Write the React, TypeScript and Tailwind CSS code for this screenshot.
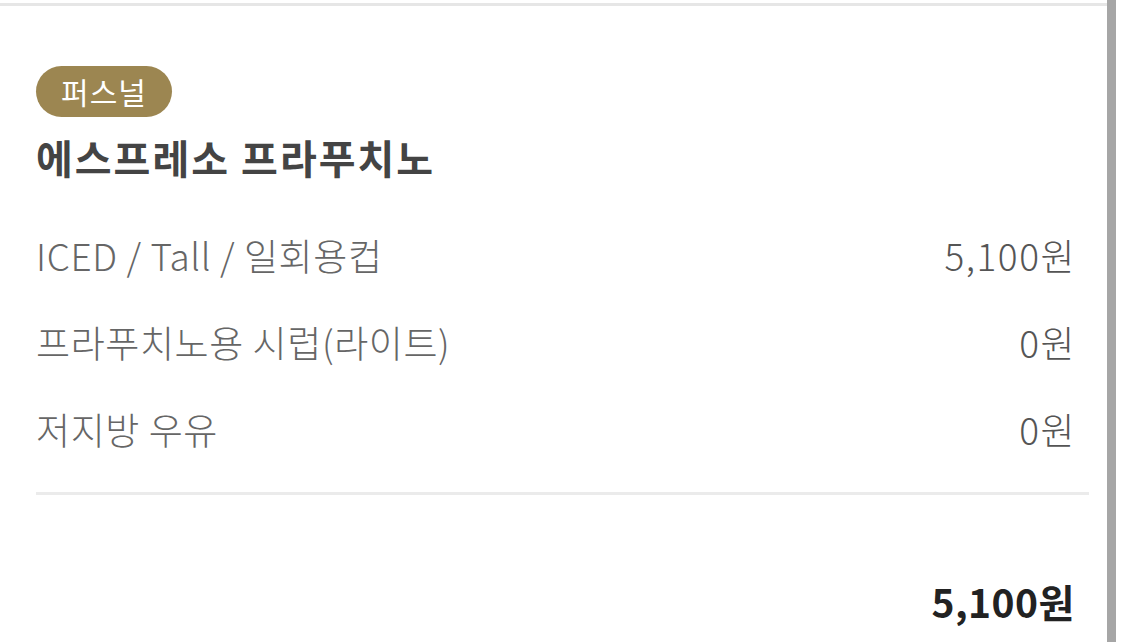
const options = [
  { name: 'ICED / Tall / 일회용컵', price: '5,100원' },
  { name: '프라푸치노용 시럽(라이트)', price: '0원' },
  { name: '저지방 우유', price: '0원' },
]

export default function App() {
  return (
    <div
      className="flex h-[642px] w-[1125px] overflow-hidden bg-white"
      style={{ fontFamily: '"Noto Sans CJK KR", "Noto Sans", sans-serif' }}
    >
      <div className="mt-[3px] flex w-[1107px] flex-col border-t-[3px] border-[#e6e6e6]">
        <div className="flex flex-col pl-[36px] pr-[18px] pt-[60px]">
          {/* Badge */}
          <span className="flex h-[51px] w-[136px] items-center justify-center rounded-full bg-[#9c8651] text-[30px] tracking-[1px] text-white">
            퍼스널
          </span>

          {/* Drink name */}
          <h1 className="mt-[16px] text-[40px] leading-[49px] font-bold tracking-[2px] text-[#444]">
            에스프레소 프라푸치노
          </h1>

          {/* Options */}
          <div className="mt-[30px] flex flex-col">
            {options.map((o) => (
              <div key={o.name} className="flex h-[87px] items-center justify-between pr-[13px]">
                <span className="text-[37px] font-light tracking-[0.6px] text-[#666]">{o.name}</span>
                <span className="text-[37px] font-light tracking-[1.5px] text-[#555]">{o.price}</span>
              </div>
            ))}
          </div>

          <div className="mt-[19px] h-[3px] bg-[#ebebeb]" />

          {/* Total */}
          <div className="mt-[81px] flex justify-end pr-[14px]">
            <span className="text-[39px] leading-[50px] font-bold tracking-[0.5px] text-[#222]">5,100원</span>
          </div>
        </div>
      </div>
      <div className="w-[9px] bg-[#a6a6a6]" />
    </div>
  )
}
